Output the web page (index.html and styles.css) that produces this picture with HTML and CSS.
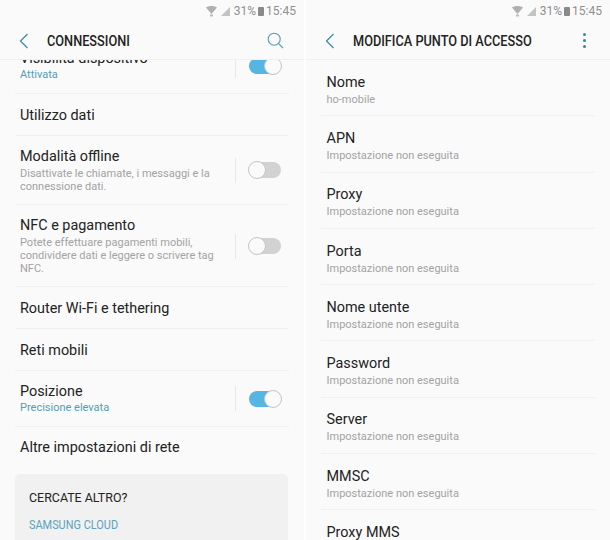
FILE: index.html
```html
<!DOCTYPE html>
<html lang="en">
<head>
    <meta charset="UTF-8">
    <title>Connessioni</title>
    <link rel="stylesheet" href="styles.css">
</head>
<body>
    <div class="screens">
        <!-- Left screen: Connessioni -->
        <div class="screen">
            <div class="status">
                <svg class="st-wifi" width="13" height="11" viewBox="0 0 13 11"><path d="M1 1.5C4 -0.5 9 -0.5 12 1.5L6.5 8Z" fill="#b0b0b0"/><rect x="5" y="8.5" width="3" height="2" fill="#bbb"/></svg>
                <svg class="st-signal" width="11" height="11" viewBox="0 0 11 11"><path d="M10 1V10H1Z" fill="#c4c4c4"/></svg>
                <span>31%</span>
                <span class="st-batt"></span>
                <span>15:45</span>
            </div>
            <div class="bar">
                <svg class="back" width="10" height="16" viewBox="0 0 10 16"><path d="M8.5 1L1.5 8L8.5 15" fill="none" stroke="#3d8ea3" stroke-width="1.3"/></svg>
                <div class="bar-title">CONNESSIONI</div>
                <svg class="search" width="17" height="17" viewBox="0 0 17 17"><circle cx="7.2" cy="7.2" r="6" fill="none" stroke="#5b9db5" stroke-width="1.1"/><path d="M11.6 11.6L16 16" stroke="#5b9db5" stroke-width="1.1"/></svg>
            </div>
            <div class="list">
                <div class="row row-s56 row-cut">
                    <div class="row-text">
                        <div class="name">Visibilità dispositivo</div>
                        <div class="sub on-text">Attivata</div>
                    </div>
                    <div class="sep"></div>
                    <div class="switch on"></div>
                </div>
                <div class="row row-s42"><div class="name">Utilizzo dati</div></div>
                <div class="row row-s69">
                    <div class="row-text">
                        <div class="name">Modalità offline</div>
                        <div class="sub">Disattivate le chiamate, i messaggi e la connessione dati.</div>
                    </div>
                    <div class="sep"></div>
                    <div class="switch"></div>
                </div>
                <div class="row row-s82">
                    <div class="row-text">
                        <div class="name">NFC e pagamento</div>
                        <div class="sub">Potete effettuare pagamenti mobili, condividere dati e leggere o scrivere tag NFC.</div>
                    </div>
                    <div class="sep"></div>
                    <div class="switch"></div>
                </div>
                <div class="row row-s42"><div class="name">Router Wi-Fi e tethering</div></div>
                <div class="row row-s42"><div class="name">Reti mobili</div></div>
                <div class="row row-s56">
                    <div class="row-text">
                        <div class="name">Posizione</div>
                        <div class="sub on-text">Precisione elevata</div>
                    </div>
                    <div class="sep"></div>
                    <div class="switch on"></div>
                </div>
                <div class="row row-s42 row-last"><div class="name">Altre impostazioni di rete</div></div>
            </div>
            <div class="more">
                <div class="more-title">CERCATE ALTRO?</div>
                <div class="more-link">SAMSUNG CLOUD</div>
            </div>
        </div>

        <!-- Right screen: Modifica punto di accesso -->
        <div class="screen">
            <div class="status">
                <svg class="st-wifi" width="13" height="11" viewBox="0 0 13 11"><path d="M1 1.5C4 -0.5 9 -0.5 12 1.5L6.5 8Z" fill="#b0b0b0"/><rect x="5" y="8.5" width="3" height="2" fill="#bbb"/></svg>
                <svg class="st-signal" width="11" height="11" viewBox="0 0 11 11"><path d="M10 1V10H1Z" fill="#c4c4c4"/></svg>
                <span>31%</span>
                <span class="st-batt"></span>
                <span>15:45</span>
            </div>
            <div class="bar">
                <svg class="back" width="10" height="16" viewBox="0 0 10 16"><path d="M8.5 1L1.5 8L8.5 15" fill="none" stroke="#3d8ea3" stroke-width="1.3"/></svg>
                <div class="bar-title">MODIFICA PUNTO DI ACCESSO</div>
                <div class="dots"><span></span><span></span><span></span></div>
            </div>
            <div class="list">
                <div class="row row-apn"><div class="row-text"><div class="name">Nome</div><div class="sub">ho-mobile</div></div></div>
                <div class="row row-apn"><div class="row-text"><div class="name">APN</div><div class="sub">Impostazione non eseguita</div></div></div>
                <div class="row row-apn"><div class="row-text"><div class="name">Proxy</div><div class="sub">Impostazione non eseguita</div></div></div>
                <div class="row row-apn"><div class="row-text"><div class="name">Porta</div><div class="sub">Impostazione non eseguita</div></div></div>
                <div class="row row-apn"><div class="row-text"><div class="name">Nome utente</div><div class="sub">Impostazione non eseguita</div></div></div>
                <div class="row row-apn"><div class="row-text"><div class="name">Password</div><div class="sub">Impostazione non eseguita</div></div></div>
                <div class="row row-apn"><div class="row-text"><div class="name">Server</div><div class="sub">Impostazione non eseguita</div></div></div>
                <div class="row row-apn"><div class="row-text"><div class="name">MMSC</div><div class="sub">Impostazione non eseguita</div></div></div>
                <div class="row row-apn"><div class="row-text"><div class="name">Proxy MMS</div><div class="sub">Impostazione non eseguita</div></div></div>
            </div>
        </div>
    </div>
</body>
</html>
```

FILE: styles.css
```css
html, body {
    margin: 0;
    height: 540px;
    overflow: hidden;
    background-color: #fff;
}
.screens {
    display: flex;
    gap: 2px;
    height: 540px;
    font-family: Roboto, sans-serif;
}
.screen {
    width: 304px;
    height: 540px;
    overflow: hidden;
    background-color: #fafafa;
}
.status {
    display: flex;
    align-items: center;
    justify-content: flex-end;
    gap: 2px;
    height: 22px;
    padding-right: 8px;
    font-size: 12px;
    color: #8f8f8f;
}
.st-signal {
    margin-right: 1px;
}
.st-batt {
    width: 6px;
    height: 9px;
    background-color: #8a8a8a;
    border-radius: 1px;
}
.bar {
    display: flex;
    align-items: center;
    height: 38px;
    border-bottom: 1px solid #efefef;
    box-sizing: border-box;
}
.back {
    margin-left: 19px;
}
.bar-title {
    margin-left: 18px;
    flex: 1;
    font-size: 14px;
    font-weight: 500;
    color: #222;
    transform: scaleX(0.91);
    transform-origin: left center;
}
.search {
    margin-right: 20px;
}
.dots {
    display: flex;
    flex-direction: column;
    gap: 3px;
    margin-right: 24px;
}
.dots span {
    width: 3px;
    height: 3px;
    border-radius: 50%;
    background-color: #2f8a9e;
}
.list {
    margin: 0 15px;
    overflow: hidden;
}
.row {
    display: flex;
    align-items: center;
    box-sizing: border-box;
    padding: 0 5px;
    border-bottom: 1px solid #f0f0f0;
}
/* first row is scrolled partly under the bar */
.row-cut {
    margin-top: -22px;
}
.row-s42 { height: 42px; padding-top: 2px; }
.row-s56 { height: 56px; }
.row-s69 { height: 69px; }
.row-s82 { height: 82px; padding-top: 1px; }
.row-last { border-bottom: none; padding-top: 0; }
.row-apn {
    height: 56.3px;
    padding: 4px 6px 0 5.5px;
}
.row-text {
    flex: 1;
    min-width: 0;
}
.name {
    font-size: 14.4px;
    line-height: 18px;
    color: #222;
}
.sub {
    margin-top: 1px;
    font-size: 11px;
    line-height: 13px;
    color: #a3a3a3;
}
.on-text {
    margin-top: 0;
    color: #4f9fb8;
}
.sep {
    width: 1px;
    height: 25px;
    margin: 0 13px 0 14px;
    background-color: #e8e8e8;
    flex-shrink: 0;
}
.switch {
    position: relative;
    width: 32px;
    height: 16px;
    margin-right: 3px;
    border-radius: 8px;
    background-color: #d2d2d2;
    flex-shrink: 0;
}
.switch::after {
    content: "";
    position: absolute;
    left: -1px;
    top: -1px;
    width: 16px;
    height: 16px;
    border: 1px solid #c4c4c4;
    border-radius: 50%;
    background-color: #fafafa;
}
.switch.on {
    background-color: #55b5e3;
}
.switch.on::after {
    left: auto;
    right: -1px;
}
.more {
    margin: 5px 16px 0 15px;
    height: 100px;
    padding: 15px 14px;
    box-sizing: border-box;
    background-color: #f1f1f1;
    border-radius: 5px;
}
.more-title {
    font-size: 13.5px;
    line-height: 16px;
    color: #222;
    transform: scaleX(0.92);
    transform-origin: left center;
}
.more-link {
    margin-top: 12px;
    font-size: 12px;
    line-height: 16px;
    color: #5da2ba;
    transform: scaleX(0.91);
    transform-origin: left center;
}
```
